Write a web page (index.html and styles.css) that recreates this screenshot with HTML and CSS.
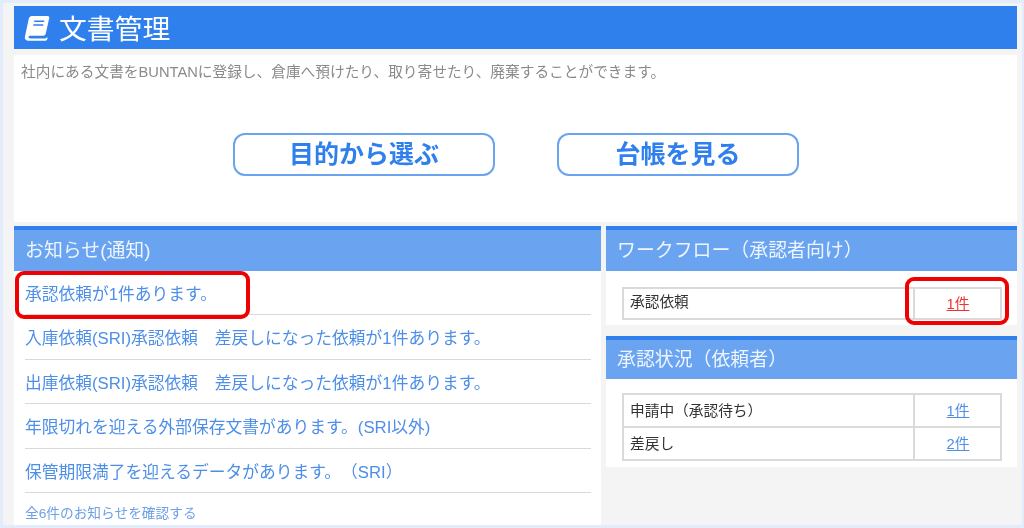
FILE: index.html
```html
<!DOCTYPE html>
<html lang="ja">
<head>
<meta charset="utf-8">
<title>文書管理</title>
<link rel="stylesheet" href="styles.css">
</head>
<body>
<div class="frame">
  <header class="page-title">
    <svg class="book" viewBox="0 0 26 26" aria-hidden="true">
      <path fill="#fff" d="M8 1h15.500c1.300 0 2 .9 1.700 2.200l-3.500 15.600c-.3 1.300-1.100 1.900-2.400 1.900H7c-1.700 0-2.600.6-2.600 1.400s.9 1.300 2.400 1.300h14.600c.8 0 1.300-.4 1.500-1.100l.8.500-.5 1.500c-.3.9-1 1.500-2 1.500H5.200C2.300 25.800.4 24.300.9 21.800L4.600 4.500C5 2.400 6.100 1 8 1z"/>
      <path fill="none" stroke="#2f80ed" stroke-width="1.600" d="M10.200 6.300h10M9.300 10h10"/>
    </svg>
    <h1>文書管理</h1>
  </header>
  <section class="intro">
    <p class="intro-text">社内にある文書をBUNTANに登録し、倉庫へ預けたり、取り寄せたり、廃棄することができます。</p>
    <div class="actions">
      <a class="action action-wide">目的から選ぶ</a>
      <a class="action action-narrow">台帳を見る</a>
    </div>
  </section>
  <div class="columns">
    <section class="notices panel">
      <h2 class="panel-head">お知らせ(通知)</h2>
      <ul class="notice-list">
        <li>承認依頼が1件あります。</li>
        <li>入庫依頼(SRI)承認依頼　差戻しになった依頼が1件あります。</li>
        <li>出庫依頼(SRI)承認依頼　差戻しになった依頼が1件あります。</li>
        <li>年限切れを迎える外部保存文書があります。(SRI以外)</li>
        <li>保管期限満了を迎えるデータがあります。（SRI）</li>
      </ul>
      <a class="all-link">全6件のお知らせを確認する</a>
    </section>
    <div class="side">
      <section class="panel">
        <h2 class="panel-head">ワークフロー（承認者向け）</h2>
        <div class="table-wrap workflow-wrap">
          <table class="count-table">
            <tr><td>承認依頼</td><td class="count"><a class="danger">1件</a></td></tr>
          </table>
        </div>
      </section>
      <section class="panel">
        <h2 class="panel-head status-head">承認状況（依頼者）</h2>
        <div class="table-wrap">
          <table class="count-table status-table">
            <tr><td>申請中（承認待ち）</td><td class="count"><a>1件</a></td></tr>
            <tr><td>差戻し</td><td class="count"><a>2件</a></td></tr>
          </table>
        </div>
      </section>
    </div>
  </div>
  <div class="mark mark-left"></div>
  <div class="mark mark-right"></div>
</div>
</body>
</html>
```
FILE: styles.css
```css
* { box-sizing: border-box; }
html, body { margin: 0; padding: 0; }
body {
  width: 1024px;
  height: 528px;
  overflow: hidden;
  font-family: "Liberation Sans", "Noto Sans CJK JP", sans-serif;
  text-spacing-trim: space-all;
  background: #f4f4f4;
}
.frame {
  position: relative;
  width: 1024px;
  height: 528px;
  padding: 3px 5px 0 11px;
  border: 3px solid #e2ecfd;
  border-right-width: 2px;
  background: #f4f4f4;
  overflow: hidden;
  filter: blur(0.45px);
}
.page-title {
  display: flex;
  align-items: center;
  height: 43px;
  padding-left: 10px;
  background: #2f80ed;
  color: #fff;
}
.book { width: 26px; height: 26px; margin-right: 9px; flex: none; }
.page-title h1 { margin: 0; padding-top: 4px; font-size: 27.800px; font-weight: 400; line-height: 1; }
.intro {
  height: 167px;
  margin-top: 6px;
  background: #fff;
  padding: 7px 7px 0;
}
.intro-text { margin: 0; font-size: 14.700px; line-height: 20px; color: #8a8a8a; white-space: nowrap; }
.actions { display: flex; justify-content: center; gap: 62px; margin-top: 51px; }
.action {
  display: flex;
  align-items: center;
  justify-content: center;
  height: 43px;
  padding: 0 0 6px 1px;
  border: 2px solid #6aa3f0;
  border-radius: 12px;
  color: #2f80ed;
  font-size: 25px;
  font-weight: 700;
  background: #fff;
}
.action-wide { width: 262px; }
.action-narrow { width: 242px; }
.columns { display: flex; gap: 5px; margin-top: 4px; height: 299px; }
.panel { background: #fff; }
.notices { width: 587px; height: 299px; }
.side { width: 411px; display: flex; flex-direction: column; gap: 11px; }
.panel-head {
  margin: 0;
  height: 45px;
  padding-left: 11px;
  border-top: 4px solid #2f80ed;
  background: #6aa4f1;
  color: #eef5ff;
  font-size: 18.900px;
  font-weight: 400;
  line-height: 42px;
  white-space: nowrap;
}
.status-head { height: 43px; line-height: 40px; }
.notice-list { list-style: none; margin: 0 10px 0 11px; padding: 0; }
.notice-list li {
  height: 44.400px;
  border-bottom: 1.500px solid #d9d9d9;
  color: #4d8fe8;
  font-size: 16.750px;
  line-height: 47px;
  white-space: nowrap;
}
.all-link {
  display: block;
  margin: 11px 0 0 11px;
  color: #6ea0e6;
  font-size: 13.700px;
  line-height: 20px;
}
.table-wrap { padding: 14px 16px 6px; }
.workflow-wrap { padding: 16px 16px 5px; }
.count-table { width: 380px; border-collapse: collapse; table-layout: fixed; }
.count-table td {
  height: 31px;
  padding: 0 0 3px 6px;
  border: 2px solid #dadada;
  color: #333;
  font-size: 14.700px;
  line-height: 20px;
  white-space: nowrap;
}
.status-table td { height: 33px; padding-bottom: 0; }
.count-table td.count {
  width: 87px;
  padding: 1px 0 0 1px;
  text-align: center;
}
.count a { color: #4d8fe8; text-decoration: underline; }
.count a.danger { color: #f03030; }
.mark {
  position: absolute;
  border: 4px solid #f00000;
  border-radius: 9px;
}
.mark-left { left: 12px; top: 268px; width: 235px; height: 48px; }
.mark-right { left: 902px; top: 274px; width: 104px; height: 48px; }
```
